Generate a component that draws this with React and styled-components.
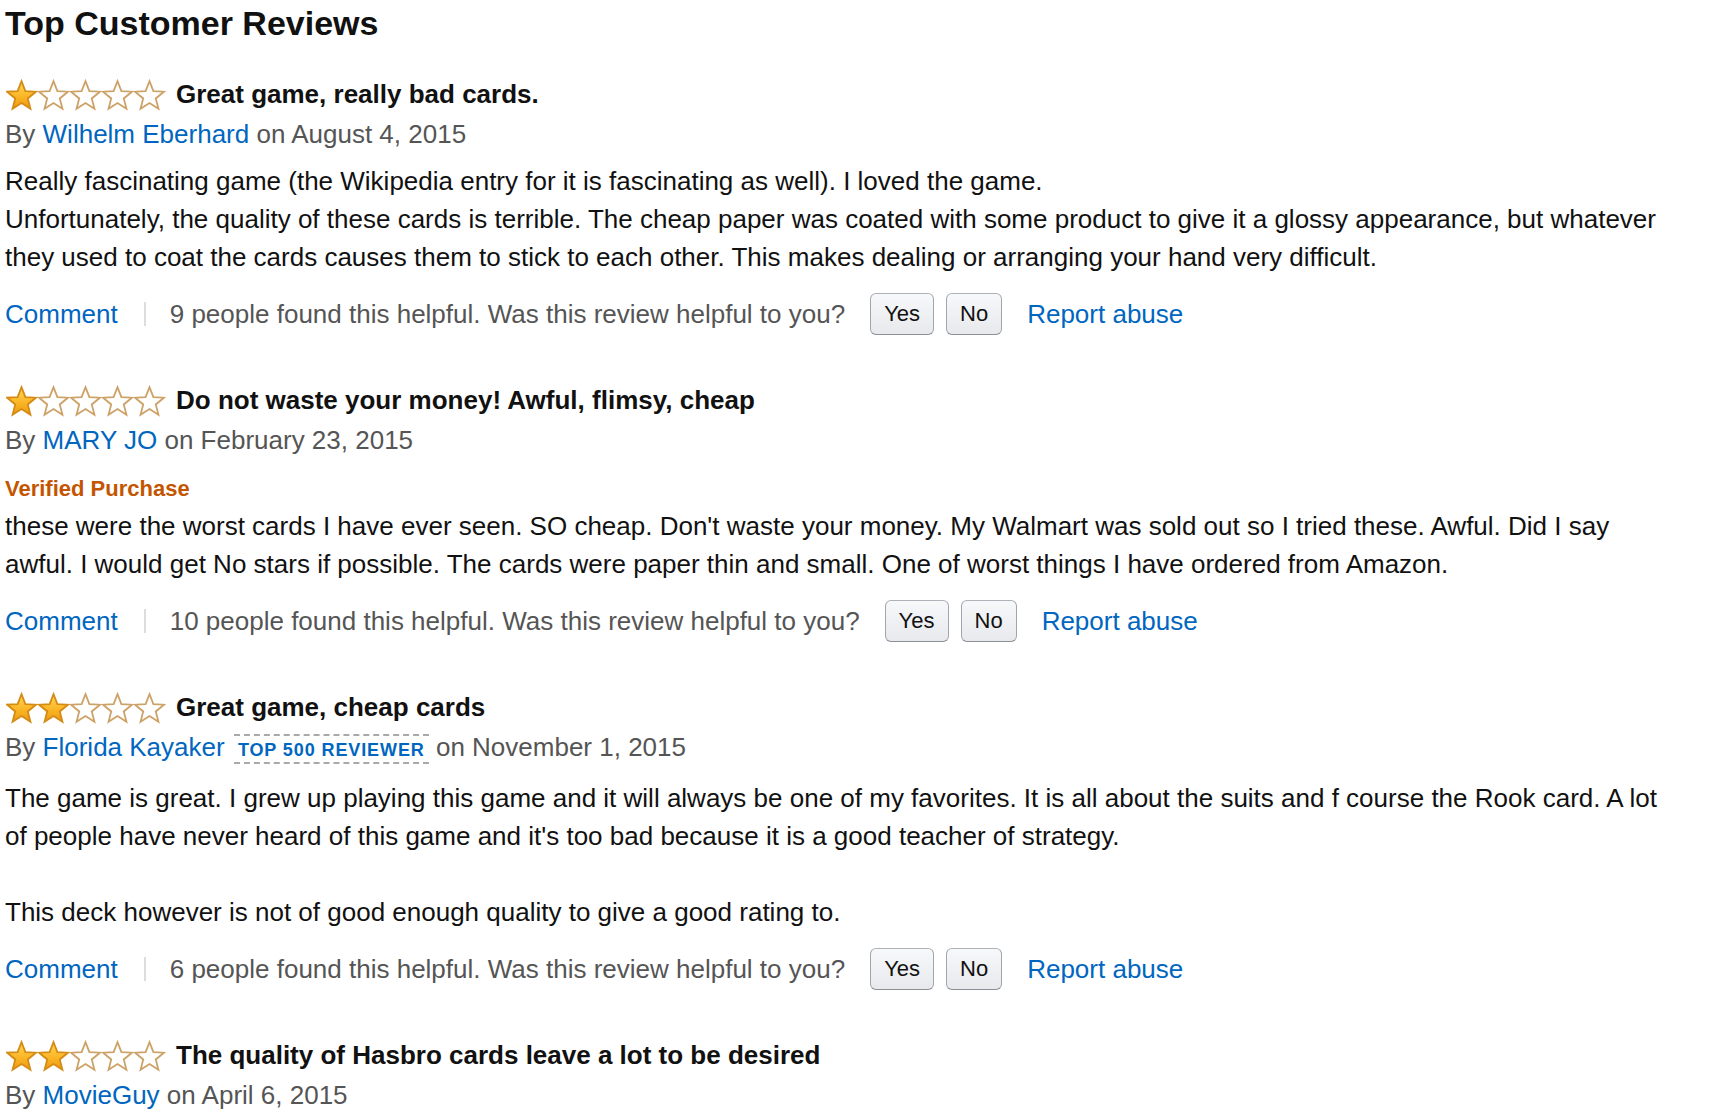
import React from "react";
import styled, { createGlobalStyle } from "styled-components";

const GlobalStyle = createGlobalStyle`
  html, body {
    margin: 0;
    padding: 0;
    background: #fff;
    overflow: hidden;
  }
  body {
    font-family: "Liberation Sans", Arial, Helvetica, sans-serif;
    color: #111;
  }
`;

const Page = styled.div`
  padding: 0 0 0 5px;
  width: 1670px;
`;

const Heading = styled.h2`
  margin: 3px 0 33px;
  font-size: 34px;
  font-weight: bold;
  line-height: 40px;
  color: #111;
`;

const Review = styled.div`
  & + & {
    margin-top: 47px;
  }
`;

const TitleRow = styled.div`
  display: flex;
  align-items: center;
  gap: 10px;
  height: 37px;
  margin-bottom: 2px;
`;

const Title = styled.span`
  font-size: 26px;
  font-weight: bold;
  line-height: 37px;
  color: #111;
`;

const ByLine = styled.div`
  font-size: 26px;
  line-height: 38px;
  color: #555;
`;

const Link = styled.a`
  color: #0066c0;
  text-decoration: none;
  cursor: pointer;
`;

const Badge = styled.span`
  display: inline-block;
  margin: 0 0 6px 2px;
  padding: 3px 4px 1px;
  border-top: 2px dashed #a9a9a9;
  border-bottom: 2px dashed #a9a9a9;
  font-size: 18px;
  line-height: 22px;
  font-weight: bold;
  letter-spacing: 0.9px;
  color: #0066c0;
`;

const Verified = styled.div`
  margin-top: 11px;
  font-size: 22px;
  font-weight: bold;
  line-height: 38px;
  color: #c45500;
`;

const Body = styled.div`
  margin-top: ${(p) => (p.$afterBadge ? "-1px" : "9px")};
  font-size: 26px;
  line-height: 38px;
  color: #111;
`;

const ActionRow = styled.div`
  display: flex;
  align-items: center;
  height: 42px;
  margin-top: 17px;
  font-size: 26px;
`;

const Divider = styled.span`
  width: 2px;
  height: 24px;
  background: #dddddd;
  margin: 0 24px 0 26px;
`;

const Helpful = styled.span`
  color: #555;
`;

const VoteGroup = styled.div`
  display: flex;
  gap: 12px;
  margin: 0 25px 0 25px;
`;

const VoteButton = styled.button`
  height: 42px;
  padding: 0 13px;
  border: 1px solid #adb1b8;
  border-color: #adb1b8 #a2a6ac #8d9096;
  border-radius: 6px;
  background: linear-gradient(to bottom, #f7f8fa, #e7e9ec);
  font-family: "Liberation Sans", Arial, sans-serif;
  font-size: 22px;
  color: #111;
  cursor: pointer;
`;

const StarSvg = styled.svg`
  display: block;
  flex: none;
  margin-left: 1px;
`;

const starPoints = (cx, cy, R, r) => {
  const pts = [];
  for (let i = 0; i < 10; i++) {
    const rad = i % 2 === 0 ? R : r;
    const a = (-90 + i * 36) * (Math.PI / 180);
    pts.push(`${(cx + rad * Math.cos(a)).toFixed(2)},${(cy + rad * Math.sin(a)).toFixed(2)}`);
  }
  return pts.join(" ");
};

const Stars = ({ rating }) => (
  <StarSvg width="160" height="32" viewBox="0 0 160 32">
    <defs>
      <linearGradient id="starGold" x1="0" y1="0" x2="0" y2="1">
        <stop offset="0" stopColor="#ffd85a" />
        <stop offset="0.55" stopColor="#fbb627" />
        <stop offset="1" stopColor="#ec9a12" />
      </linearGradient>
    </defs>
    {[0, 1, 2, 3, 4].map((i) => (
      <polygon
        key={i}
        points={starPoints(15.5 + i * 32, 17.4, 15.2, 6.6)}
        fill={i < rating ? "url(#starGold)" : "#ffffff"}
        stroke={i < rating ? "#d58b14" : "#cda267"}
        strokeWidth="1.8"
        strokeLinejoin="miter"
      />
    ))}
  </StarSvg>
);

const reviews = [
  {
    rating: 1,
    title: "Great game, really bad cards.",
    author: "Wilhelm Eberhard",
    date: "August 4, 2015",
    body: [
      "Really fascinating game (the Wikipedia entry for it is fascinating as well). I loved the game.",
      "Unfortunately, the quality of these cards is terrible. The cheap paper was coated with some product to give it a glossy appearance, but whatever they used to coat the cards causes them to stick to each other. This makes dealing or arranging your hand very difficult.",
    ],
    helpful: 9,
  },
  {
    rating: 1,
    title: "Do not waste your money! Awful, flimsy, cheap",
    author: "MARY JO",
    date: "February 23, 2015",
    verified: true,
    body: [
      "these were the worst cards I have ever seen. SO cheap. Don't waste your money. My Walmart was sold out so I tried these. Awful. Did I say awful. I would get No stars if possible. The cards were paper thin and small. One of worst things I have ordered from Amazon.",
    ],
    helpful: 10,
  },
  {
    rating: 2,
    title: "Great game, cheap cards",
    author: "Florida Kayaker",
    badge: "TOP 500 REVIEWER",
    date: "November 1, 2015",
    body: [
      "The game is great. I grew up playing this game and it will always be one of my favorites. It is all about the suits and f course the Rook card. A lot of people have never heard of this game and it's too bad because it is a good teacher of strategy.",
      "",
      "This deck however is not of good enough quality to give a good rating to.",
    ],
    helpful: 6,
  },
  {
    rating: 2,
    title: "The quality of Hasbro cards leave a lot to be desired",
    author: "MovieGuy",
    date: "April 6, 2015",
    body: [],
  },
];

const ReviewItem = ({ review }) => (
  <Review>
    <TitleRow>
      <Stars rating={review.rating} />
      <Title>{review.title}</Title>
    </TitleRow>
    <ByLine>
      By <Link>{review.author}</Link>
      {review.badge && (
        <>
          {" "}
          <Badge>{review.badge}</Badge>
        </>
      )}{" "}
      on {review.date}
    </ByLine>
    {review.verified && <Verified>Verified Purchase</Verified>}
    {review.body.length > 0 && (
      <Body $afterBadge={review.verified}>
        {review.body.map((line, i) => (
          <React.Fragment key={i}>
            {i > 0 && <br />}
            {line}
          </React.Fragment>
        ))}
      </Body>
    )}
    {review.helpful != null && (
      <ActionRow>
        <Link>Comment</Link>
        <Divider />
        <Helpful>
          {review.helpful} people found this helpful. Was this review helpful to you?
        </Helpful>
        <VoteGroup>
          <VoteButton>Yes</VoteButton>
          <VoteButton>No</VoteButton>
        </VoteGroup>
        <Link>Report abuse</Link>
      </ActionRow>
    )}
  </Review>
);

const App = () => (
  <>
    <GlobalStyle />
    <Page>
      <Heading>Top Customer Reviews</Heading>
      {reviews.map((r, i) => (
        <ReviewItem key={i} review={r} />
      ))}
    </Page>
  </>
);

export default App;
